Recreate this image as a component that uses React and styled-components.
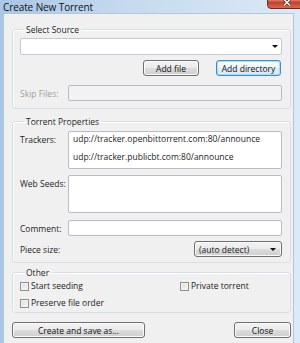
import React from 'react';
import styled, { createGlobalStyle } from 'styled-components';

const GlobalStyle = createGlobalStyle`
  html, body {
    margin: 0;
    padding: 0;
  }
  body {
    font-family: 'Open Sans', 'Noto Sans', sans-serif;
    font-size: 8.5px;
    color: #1e1e1e;
  }
`;

const Window = styled.div`
  position: relative;
  width: 300px;
  height: 343px;
  overflow: hidden;
  display: flex;
  flex-direction: column;
  background: linear-gradient(to right, #a9c6e6 0%, #c4d9ef 40%, #dce9f6 100%);
`;

const TitleBar = styled.div`
  height: 13px;
  padding-left: 3px;
  display: flex;
  align-items: center;
  font-size: 10px;
  color: #111;
  letter-spacing: -0.1px;
`;

const CloseButton = styled.div`
  position: absolute;
  top: -6px;
  left: 267px;
  width: 42px;
  height: 15px;
  border: 1px solid #6e2a23;
  border-radius: 0 0 4px 4px;
  background: linear-gradient(#e9a99c 0%, #d47060 45%, #c0402c 55%, #d66a4d 100%);
  box-sizing: border-box;
  display: flex;
  align-items: flex-end;
  padding: 0 0 2px 15px;
`;

const Content = styled.div`
  flex: 1;
  margin: 0 6px 0 3px;
  border: 1px solid #b3c7dc;
  border-bottom: none;
  background: #f0f0f0;
  padding: 9px 2px 0 8px;
  display: flex;
  flex-direction: column;
`;

const Group = styled.fieldset`
  margin: 0 0 ${(p) => p.$gap || 0}px;
  padding: ${(p) => p.$pt ?? 2}px 8px ${(p) => p.$pb || 5}px 7px;
  border: 1px solid #d5dfe5;
  border-radius: 3px;
  box-shadow: inset 1px 1px 0 #fff;
  min-width: 0;
  display: flex;
  flex-direction: column;
`;

const Legend = styled.legend`
  padding: 0 2px;
  margin-left: 4px;
  line-height: 13px;
  color: #1e1e1e;
`;

const Combo = styled.div`
  height: 15px;
  background: #fff;
  border: 1px solid #c5c9cf;
  border-radius: 2px;
  display: flex;
  align-items: center;
  justify-content: flex-end;
  padding-right: 3px;
`;

const Arrow = styled.span`
  width: 0;
  height: 0;
  border-left: 3px solid transparent;
  border-right: 3px solid transparent;
  border-top: 3px solid #111;
`;

const ButtonRow = styled.div`
  display: flex;
  justify-content: flex-end;
  gap: 17px;
  margin-top: 5px;
  padding-right: 1px;
`;

const Button = styled.div`
  width: ${(p) => p.$w}px;
  height: 16px;
  box-sizing: border-box;
  border: 1px solid ${(p) => (p.$focused ? '#3c8fc7' : '#707070')};
  border-radius: 3px;
  background: ${(p) =>
    p.$focused
      ? 'linear-gradient(#f6fbfe 0%, #eef6fb 50%, #e2eef6 50%, #d8e8f3 100%)'
      : 'linear-gradient(#f3f3f3 0%, #ebebeb 50%, #dddddd 50%, #cfcfcf 100%)'};
  box-shadow: ${(p) => (p.$focused ? 'inset 0 0 0 1px #a9dcf7' : 'inset 0 0 0 1px #fafafa')};
  display: flex;
  align-items: center;
  justify-content: center;
  color: #111;
`;

const Row = styled.div`
  display: flex;
  align-items: ${(p) => p.$align || 'center'};
  margin-top: ${(p) => p.$mt || 0}px;
`;

const Label = styled.div`
  width: 48px;
  flex-shrink: 0;
  color: ${(p) => (p.$disabled ? '#a0a0a0' : '#1e1e1e')};
  padding-top: ${(p) => p.$pt || 0}px;
`;

const Field = styled.div`
  flex: 1;
  height: ${(p) => p.$h}px;
  box-sizing: border-box;
  border: 1px solid #b9bdc3;
  border-radius: 2px;
  background: ${(p) => (p.$disabled ? '#f2f2f2' : '#fff')};
  padding: 2px 4px;
  display: flex;
  flex-direction: column;
  gap: 8px;
`;

const Line = styled.div`
  line-height: 10px;
`;

const Select = styled.div`
  width: 88px;
  height: 16px;
  box-sizing: border-box;
  border: 1px solid #707070;
  border-radius: 3px;
  background: linear-gradient(#f3f3f3 0%, #ebebeb 50%, #dddddd 50%, #cfcfcf 100%);
  box-shadow: inset 0 0 0 1px #fafafa;
  display: flex;
  align-items: center;
  justify-content: space-between;
  padding: 0 5px 0 4px;
`;

const Spacer = styled.div`
  flex: 1;
`;

const Checks = styled.div`
  display: grid;
  grid-template-columns: 160px 1fr;
  row-gap: 7px;
`;

const Check = styled.label`
  display: flex;
  align-items: center;
  gap: 2px;
  line-height: 10px;
`;

const Box = styled.span`
  width: 9px;
  height: 9px;
  box-sizing: border-box;
  border: 1px solid #8e8f8f;
  background: linear-gradient(135deg, #dcdcdc, #f6f6f6);
  box-shadow: inset 0 0 0 1px #f4f4f4;
`;

const Footer = styled.div`
  display: flex;
  justify-content: space-between;
  margin-top: 9px;
`;

export default function App() {
  return (
    <>
      <GlobalStyle />
      <Window>
        <TitleBar>Create New Torrent</TitleBar>
        <CloseButton>
          <svg width="8" height="7" viewBox="0 0 8 7">
            <path d="M1 0.5 L7 6.5 M7 0.5 L1 6.5" stroke="#5a2018" strokeWidth="2.6" />
            <path d="M1 0.5 L7 6.5 M7 0.5 L1 6.5" stroke="#fff" strokeWidth="1.4" />
          </svg>
        </CloseButton>
        <Content>
          <Group $gap={6} $pb={7}>
            <Legend>Select Source</Legend>
            <Combo>
              <Arrow />
            </Combo>
            <ButtonRow>
              <Button $w={56}>Add file</Button>
              <Button $w={65} $focused>Add directory</Button>
            </ButtonRow>
            <Row $mt={9}>
              <Label $disabled>Skip Files:</Label>
              <Field $h={16} $disabled />
            </Row>
          </Group>

          <Group $gap={3} $pb={5}>
            <Legend>Torrent Properties</Legend>
            <Row $align="flex-start" $mt={1}>
              <Label $pt={3}>Trackers:</Label>
              <Field $h={38}>
                <Line>udp://tracker.openbittorrent.com:80/announce</Line>
                <Line>udp://tracker.publicbt.com:80/announce</Line>
              </Field>
            </Row>
            <Row $align="flex-start" $mt={6}>
              <Label $pt={3}>Web Seeds:</Label>
              <Field $h={38} />
            </Row>
            <Row $mt={7}>
              <Label>Comment:</Label>
              <Field $h={16} />
            </Row>
            <Row $mt={5}>
              <Label>Piece size:</Label>
              <Spacer />
              <Select>
                <span>(auto detect)</span>
                <Arrow />
              </Select>
            </Row>
          </Group>

          <Group $pt={2} $pb={4}>
            <Legend>Other</Legend>
            <Checks>
              <Check>
                <Box />
                Start seeding
              </Check>
              <Check>
                <Box />
                Private torrent
              </Check>
              <Check>
                <Box />
                Preserve file order
              </Check>
            </Checks>
          </Group>

          <Footer>
            <Button $w={133}>Create and save as...</Button>
            <Button $w={57}>Close</Button>
          </Footer>
        </Content>
      </Window>
    </>
  );
}
